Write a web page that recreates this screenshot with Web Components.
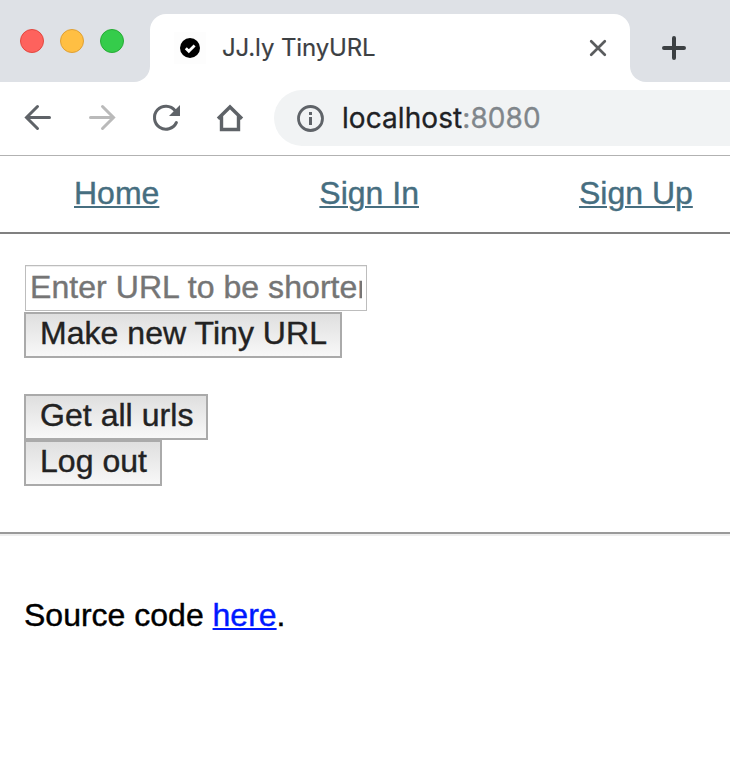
<!DOCTYPE html>
<html lang="en">
<head>
<meta charset="utf-8">
<title>JJ.ly TinyURL</title>
<style>
html,body{margin:0;padding:0;background:#fff;height:784px;overflow:hidden}
body{font-family:"Liberation Sans",Arial,sans-serif}
</style>
</head>
<body>
<tiny-window></tiny-window>
<script>
const define = (name, css, html) => customElements.define(name, class extends HTMLElement {
  constructor() {
    super();
    this.attachShadow({mode: "open"}).innerHTML = `<style>*{box-sizing:border-box}svg{display:block;flex:none}${css}</style>${html}`;
  }
});

define("traffic-lights", `
:host{display:flex;gap:16px;padding:29px 0 0 20px;width:150px;height:82px;flex:none;background:#dee1e6;border-bottom-right-radius:16px}
i{width:24px;height:24px;border-radius:50%;border:1px solid}
.r{background:#fe625d;border-color:#e2473f}.y{background:#ffbf43;border-color:#dfa035}.g{background:#35cc4b;border-color:#27ab35}`,
`<i class="r"></i><i class="y"></i><i class="g"></i>`);

define("browser-tab", `
:host{display:block;flex:none;width:480px;height:82px;padding-top:14px;box-sizing:border-box;background:linear-gradient(#dee1e6 40px,#fff 40px)}
section{display:flex;align-items:center;height:68px;padding:0 22px 0 24px;background:#fff;border-radius:16px 16px 0 0}
.fav{background:#fdfdfd;width:32px;height:32px}
span{flex:1;margin-left:16px;font:24px/30px Inter,sans-serif;letter-spacing:-.13px;color:#3c4043;-webkit-text-stroke:.2px;white-space:nowrap}`,
`<section><svg class="fav" viewBox="0 0 32 32"><circle cx="16" cy="16" r="10"/><path d="M11.8 16.3l3 3 5.8-5.8" fill="none" stroke="#fff" stroke-width="2.8"/></svg>
<span><slot></slot></span>
<svg width="20" height="20" viewBox="0 0 20 20"><path d="M3.200 3.200l13.600 13.600M16.800 3.200L3.200 16.800" stroke="#5a5c5e" stroke-width="2.700" stroke-linecap="round"/></svg></section>`);

define("new-tab", `
:host{display:flex;flex:1;height:82px;padding:36px 0 0 32px;background:#dee1e6;border-bottom-left-radius:16px}`,
`<svg width="24" height="24" viewBox="0 0 24 24"><path d="M12 2v20M2 12h20" stroke="#3c4043" stroke-width="4" stroke-linecap="round"/></svg>`);

define("tool-bar", `
:host{display:flex;height:74px;padding:8px 0 0;border-bottom:1px solid #b2b2b2;background:#fff}
.icons{display:flex;width:274px;padding:12px 0 0 22px;gap:32px;flex:none}
.url{flex:1;display:flex;align-items:center;height:56px;background:#f1f3f4;border-radius:28px 0 0 28px;padding-left:22px}
p{margin:0 0 0 18px;font:28px/34px Inter,sans-serif;color:#202124;letter-spacing:.07px;-webkit-text-stroke:.3px;white-space:nowrap}
em{font-style:normal;color:#80868b}`,
`<div class="icons">
<svg width="32" height="32" viewBox="0 0 32 32" fill="none" stroke="#5f6368" stroke-width="3" stroke-linecap="round"><path d="M27.500 15.500H5M15.500 4.500L4.500 15.500l11 11"/></svg>
<svg width="32" height="32" viewBox="0 0 32 32" fill="none" stroke="#bababa" stroke-width="3" stroke-linecap="round"><path d="M4.500 15.500H27M16.500 4.500l11 11-11 11"/></svg>
<svg width="32" height="32" viewBox="0 0 32 32"><path d="M26.400 20.500A11.500 11.500 0 1 1 25 8.500" fill="none" stroke="#5f6368" stroke-width="3" stroke-linecap="round"/><path d="M30 3v11H19z" fill="#5f6368"/></svg>
<svg width="32" height="32" viewBox="0 0 32 32" fill="none" stroke="#5f6368" stroke-width="3.400"><path d="M4 16.800L16 5l12 11.800M7.500 14v13.500h17V14"/></svg>
</div>
<div class="url"><svg width="28" height="28" viewBox="0 0 28 28"><circle cx="14.500" cy="14.500" r="12" fill="none" stroke="#5f6368" stroke-width="2.800"/><path d="M13 13h3v8h-3zM13 8h3v3h-3z" fill="#5f6368"/></svg>
<p><slot></slot><em><slot name="port"></slot></em></p></div>`);

define("site-nav", `
:host{display:flex;gap:160px;height:78px;padding:19px 0 0 74px;border-bottom:2px solid #808080;font-size:32px;line-height:36px}
a{color:#466e80;-webkit-text-stroke:.4px #466e80;text-decoration:underline;text-decoration-thickness:2px;text-underline-offset:2px;white-space:nowrap}`,
`<a>Home</a><a>Sign In</a><a>Sign Up</a>`);

define("text-field", `
:host{display:block;width:342px;height:46px;margin:0 0 1px 1px}
input{display:block;width:342px;height:46px;border:1px solid #bdbdbd;box-shadow:inset 0 1px #eee;padding:0 4px 2px;background:#fff;outline:0;border-radius:0;font:32px/36px "Liberation Sans",Arial,sans-serif;letter-spacing:.06px}
input::placeholder{color:#757575;-webkit-text-stroke:.4px #757575;opacity:1}`,
`<input placeholder="Enter URL to be shortened">`);

define("push-button", `
:host{display:block;height:46px}
button{display:block;width:var(--w);height:46px;border:2px solid #aaa;border-radius:0;padding:1px 0 5px 14px;margin:0;text-align:left;background:linear-gradient(#dfdfdf,#f8f8f8);font:32px/36px "Liberation Sans",Arial,sans-serif;letter-spacing:.04px;color:#222;-webkit-text-stroke:.4px #222;white-space:nowrap}`,
`<button><slot></slot></button>`);

define("url-panel", `
:host{display:block;height:302px;padding:31px 24px 0;border-bottom:2px solid #eee;box-shadow:inset 0 -2px #9a9a9a}
.gap{height:36px}`,
`<text-field></text-field><push-button style="--w:318px">Make new Tiny URL</push-button><div class="gap"></div><push-button style="--w:184px">Get all urls</push-button><push-button style="--w:138px">Log out</push-button>`);

define("source-note", `
:host{display:block;padding:61px 24px 0;font-size:32px;line-height:36px;color:#000;-webkit-text-stroke:.4px}
a{color:#0018ff;text-decoration:underline;text-decoration-thickness:2px;text-underline-offset:2px}`,
`Source code <a>here</a>.`);

define("tiny-window", `
:host{display:flex;flex-direction:column;width:730px;height:784px;background:#fff}
header{display:flex;height:82px;flex:none}
tool-bar,site-nav,url-panel{box-sizing:border-box;flex:none}
traffic-lights,new-tab{box-sizing:border-box}`,
`<header><traffic-lights></traffic-lights><browser-tab>JJ.ly TinyURL</browser-tab><new-tab></new-tab></header>
<tool-bar>localhost<span slot="port">:8080</span></tool-bar>
<site-nav></site-nav><url-panel></url-panel><source-note></source-note>`);
</script>
</body>
</html>
